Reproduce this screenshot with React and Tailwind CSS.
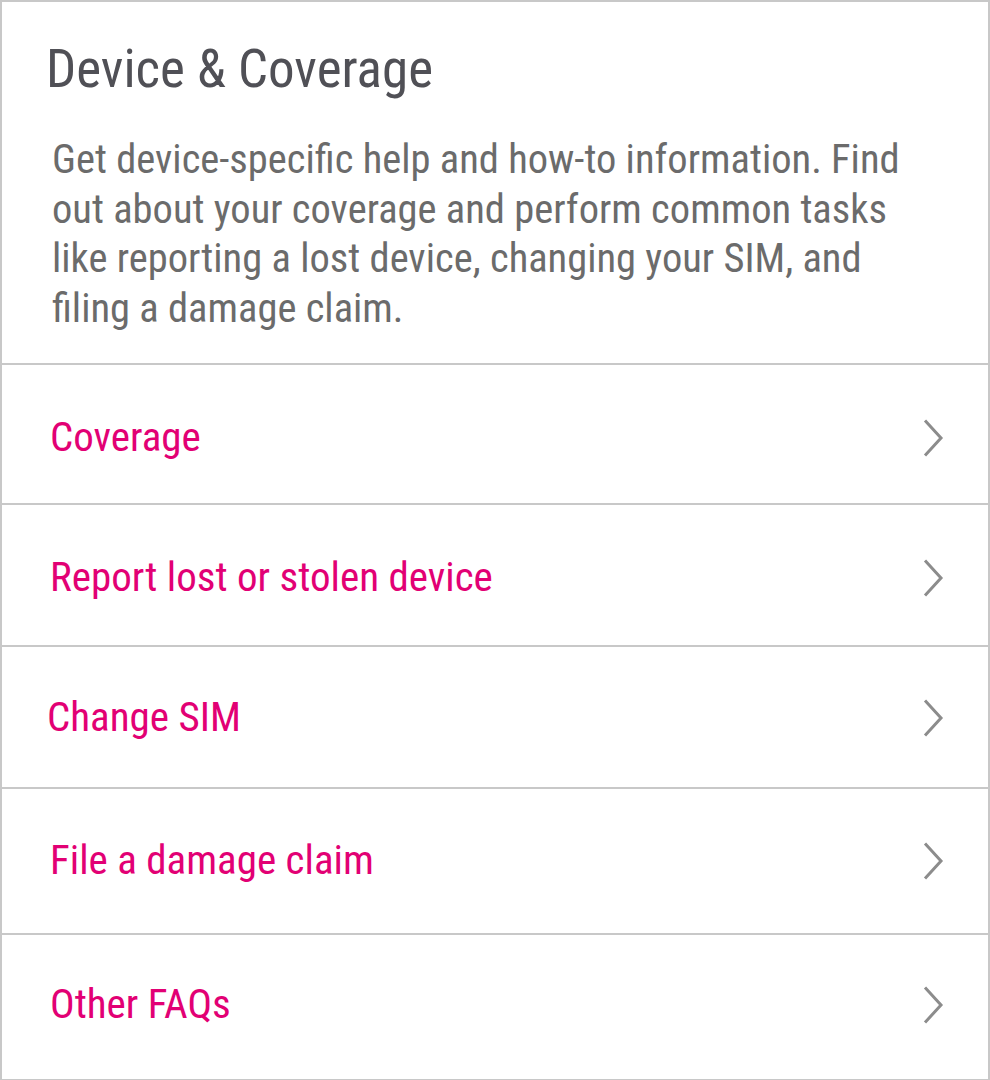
const links = [
  { label: 'Coverage', h: 'h-[140px] pt-[8px]', pl: 'pl-[48px]' },
  { label: 'Report lost or stolen device', h: 'h-[142px] pt-[6px]', pl: 'pl-[48px]' },
  { label: 'Change SIM', h: 'h-[142px] pt-[2px]', pl: 'pl-[45px]' },
  { label: 'File a damage claim', h: 'h-[146px]', pl: 'pl-[48px]' },
  { label: 'Other FAQs', h: 'h-[144px] pb-[4px]', pl: 'pl-[48px]' },
]

function Chevron() {
  return (
    <svg width="21" height="38" viewBox="0 0 21 38" fill="none" className="shrink-0">
      <polyline points="2,1.5 18,19 2,36.5" stroke="#8c8c8c" strokeWidth="3" />
    </svg>
  )
}

export default function App() {
  return (
    <div className="w-[990px] h-[1080px] bg-white font-['Roboto_Condensed',Roboto,sans-serif]">
      <div className="w-full border-2 border-[#c8c8c8] flex flex-col">
        <div className="pt-[37px] pb-[30px] border-b-2 border-[#c8c8c8]">
          <h1 className="pl-[44px] text-[53px] leading-[60px] font-normal text-[#505056]">Device &amp; Coverage</h1>
          <p className="mt-[36px] pl-[50px] pr-[60px] text-[40.5px] leading-[49.5px] text-[#6b6b6b]">
            Get device-specific help and how-to information. Find out about your coverage and perform common tasks like reporting a lost device, changing your SIM, and filing a damage claim.
          </p>
        </div>
        {links.map((l, i) => (
          <a
            key={l.label}
            href="#"
            className={`${l.h} ${l.pl} pr-[44px] flex items-center justify-between ${i < links.length - 1 ? 'border-b-2 border-[#c8c8c8]' : ''}`}
          >
            <span className="text-[41px] text-[#e20074]">{l.label}</span>
            <Chevron />
          </a>
        ))}
      </div>
    </div>
  )
}
